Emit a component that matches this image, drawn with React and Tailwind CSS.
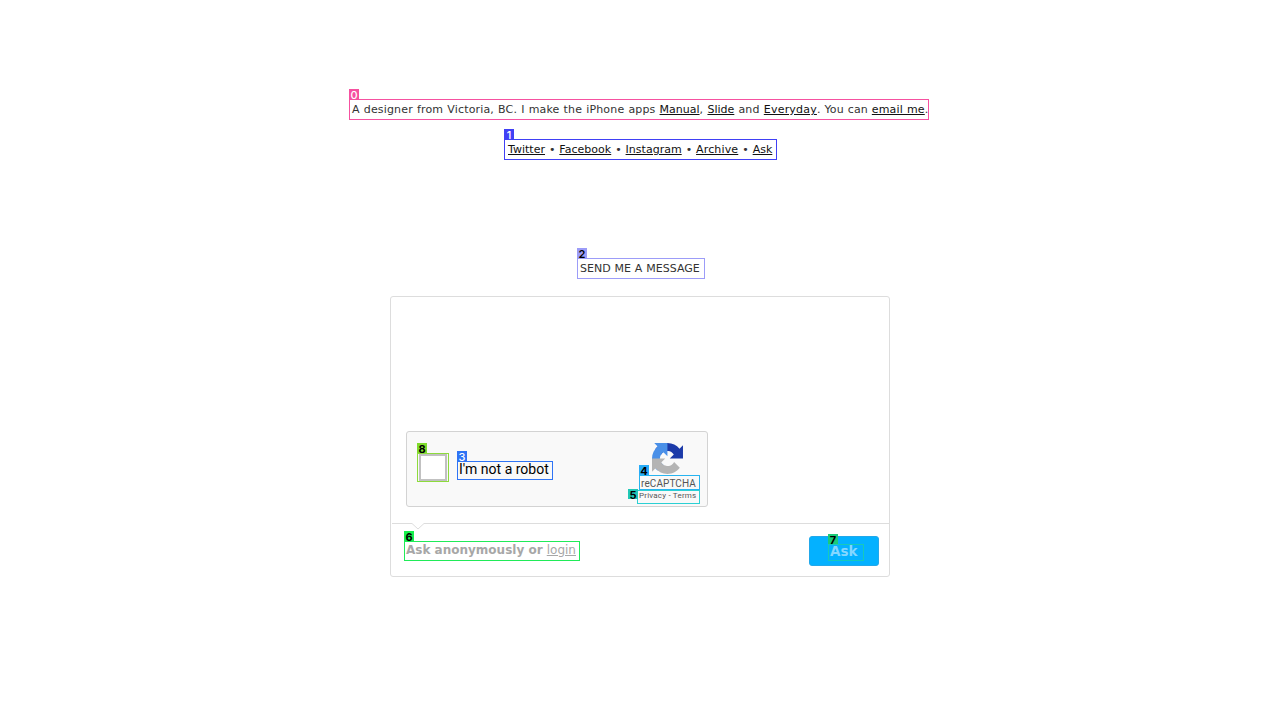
import React from 'react';

function Tag({ n, className }) {
  return (
    <span className={`absolute z-10 flex h-[10px] w-[10px] items-center justify-center pt-px font-['Inter',sans-serif] text-[11px] leading-[10px] tracking-normal ${className}`}>
      {n}
    </span>
  );
}

function Link({ children, className = '' }) {
  return <a className={`text-[#111] underline ${className}`}>{children}</a>;
}

function RecaptchaLogo() {
  return (
    <svg viewBox="0 0 64 64" className="ml-[15px] h-[31px] w-[31px]">
      <path fill="#1c3aa9" d="M64 31.955l-.033-1.37V4.687l-7.16 7.16C50.948 4.674 42.033.093 32.05.093c-10.4 0-19.622 4.96-25.458 12.64l11.736 11.86a15.55 15.55 0 0 1 4.754-5.334c2.05-1.6 4.952-2.906 8.968-2.906.485 0 .86.057 1.135.163 4.976.393 9.288 3.14 11.828 7.124l-8.307 8.307L64 31.953" />
      <path fill="#4a90e8" d="M31.862.094l-1.37.033H4.594l7.16 7.16C4.58 13.147 0 22.06 0 32.046c0 10.4 4.96 19.622 12.64 25.458L24.5 45.768a15.55 15.55 0 0 1-5.334-4.754c-1.6-2.05-2.906-4.952-2.906-8.968 0-.485.057-.86.163-1.135.393-4.976 3.14-9.288 7.124-11.828l8.307 8.307L31.86.095" />
      <path fill="#b4b4b4" d="M.001 32.045l.033 1.37v25.898l7.16-7.16c5.86 7.173 14.774 11.754 24.76 11.754 10.4 0 19.622-4.96 25.458-12.64l-11.736-11.86a15.55 15.55 0 0 1-4.754 5.334c-2.05 1.6-4.952 2.906-8.968 2.906-.485 0-.86-.057-1.135-.163-4.976-.393-9.288-3.14-11.828-7.124l8.307-8.307c-10.522.04-22.4.066-27.295-.005" />
    </svg>
  );
}

function Recaptcha() {
  return (
    <div className="flex h-[76px] w-[302px] rounded-[3px] border border-[#d3d3d3] bg-[#f9f9f9] font-['Roboto',sans-serif]">
      <div className="relative ml-[10px] mt-[21px] h-[29px] w-8 border border-[#8ddb3c] pl-px">
        <Tag n="8" className="-left-px -top-[11px] bg-[#7fdb2c] font-bold text-black" />
        <div className="h-[27px] w-7 border-2 border-[#c1c1c1] bg-white" />
      </div>
      <div className="relative ml-2 mt-[29px] h-[19px] w-24 whitespace-nowrap border border-[#2f74f5] pl-px text-[14px] leading-[15px] text-black">
        <Tag n="3" className="-left-px -top-[11px] bg-[#2f74f5] font-medium text-white" />
        I'm not a robot
      </div>
      <div className="ml-[84px] mt-[11px] w-[62px]">
        <RecaptchaLogo />
        <div className="relative ml-[2px] mt-px h-[15px] w-[61px] whitespace-nowrap border border-[#28b4f0] pl-px text-[10px] leading-[15px] tracking-[0.1px] text-[#555]">
          <Tag n="4" className="-left-px -top-[11px] bg-[#28acf8] font-bold text-black" />
          reCAPTCHA
        </div>
        <div className="relative h-[14px] w-[63px] whitespace-nowrap border border-[#2bd0d4] pl-px text-[8px] leading-[10px] tracking-[0.2px] text-[#555]">
          <Tag n="5" className="-left-[10px] -top-[2px] bg-[#20c8b8] font-bold text-black" />
          Privacy - Terms
        </div>
      </div>
    </div>
  );
}

export default function App() {
  return (
    <main className="flex h-[720px] w-[1280px] flex-col items-start overflow-hidden bg-white font-['DejaVu_Sans',sans-serif] text-[11px] text-[#333] [word-spacing:0.4px]">
      <p className="relative ml-[349px] mt-[99px] h-[21px] w-[580px] whitespace-nowrap border border-[#f651a0] pl-[2px] leading-[19px]">
        <Tag n="0" className="-left-px -top-[11px] bg-[#f651a0] font-medium text-white" />
        <span className="tracking-[0.167px]">A designer from Victoria, BC. I make the iPhone apps </span>
        <Link>Manual</Link>
        <span className="tracking-[0.25px]">, </span>
        <Link>Slide</Link>
        <span className="tracking-[0.2px]"> and </span>
        <Link className="tracking-[0.2px]">Everyday</Link>
        <span className="tracking-[0.1px]">. You can </span>
        <Link className="tracking-[0.15px]">email me</Link>.
      </p>
      <nav className="relative ml-[504px] mt-[19px] h-[21px] w-[273px] whitespace-nowrap border border-[#4040f5] pl-[3px] leading-[19px] tracking-[0.02px]">
        <Tag n="1" className="-left-px -top-[11px] bg-[#4040f5] font-medium text-white" />
        <Link>Twitter</Link> • <Link>Facebook</Link> • <Link>Instagram</Link> • <Link className="tracking-[0.15px]">Archive</Link> • <Link>Ask</Link>
      </nav>
      <h1 className="relative ml-[577px] mt-[98px] h-[21px] w-32 whitespace-nowrap border border-[#9c9cf8] pl-[2px] leading-[19px]">
        <Tag n="2" className="-left-px -top-[11px] bg-[#9c9cf8] font-semibold text-black" />
        SEND ME A MESSAGE
      </h1>
      <form className="ml-[390px] mt-[17px] flex h-[281px] w-[500px] flex-col rounded-[3px] border border-[#ddd] [word-spacing:0]">
        <div className="h-[226px] pl-[15px] pt-[134px]">
          <Recaptcha />
        </div>
        <div className="relative ml-px flex flex-1 border-t border-[#ddd]">
          <svg viewBox="0 0 14 8" className="absolute -top-px left-[19px] h-2 w-[14px]">
            <path d="M1 0h12v1L7 6.5 1 1z" fill="#fff" />
            <path d="M0 .5h1L7 6l6-5.5h1" fill="none" stroke="#ddd" />
          </svg>
          <div className="relative ml-3 mt-[17px] h-5 w-44 whitespace-nowrap border border-[#20eb58] pl-px text-[12px] font-bold leading-[16px] text-[#a7a7a7]">
            <Tag n="6" className="-left-px -top-[11px] bg-[#16f04c] font-bold text-black" />
            Ask anonymously or <a className="font-normal underline">login</a>
          </div>
          <button type="button" className="ml-auto mr-[10px] mt-3 flex h-[30px] w-[70px] rounded-[3px] border border-[#22a8ea] bg-[#04b1ff] pl-[18px] pt-[7px]">
            <span className="relative block h-[17px] w-9 border border-[#18c9ba] pl-px text-left text-[13.5px] font-bold leading-[12px] text-[#85d7ff]">
              <Tag n="7" className="-left-px -top-[11px] bg-[#1bca78] font-bold text-black" />
              Ask
            </span>
          </button>
        </div>
      </form>
    </main>
  );
}
